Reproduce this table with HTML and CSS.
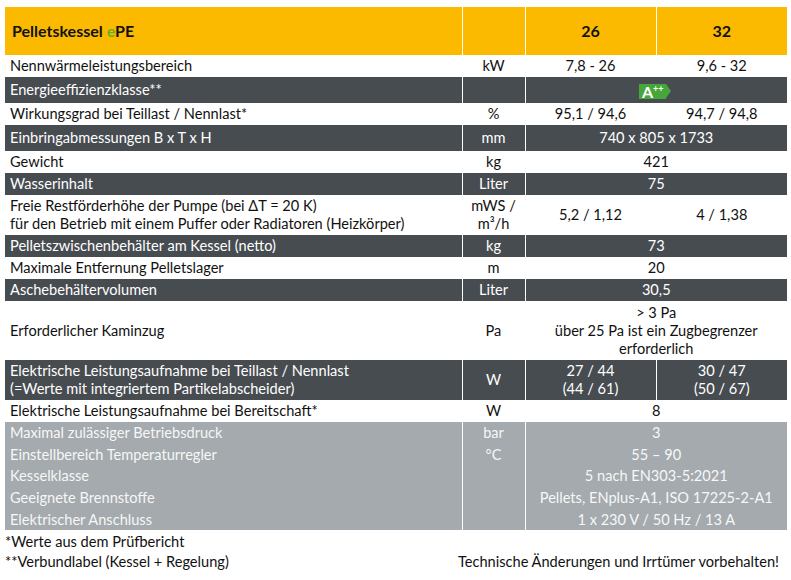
FILE: index.html
```html
<!DOCTYPE html>
<html lang="de">
<head>
<meta charset="utf-8">
<title>Pelletskessel ePE</title>
<link rel="stylesheet" href="styles.css">
</head>
<body>
<table class="spec">
  <colgroup>
    <col class="c-label"><col class="c-unit"><col class="c-val"><col class="c-val">
  </colgroup>
  <thead>
    <tr class="head">
      <th class="label">Pelletskessel <span class="e">e</span>PE</th>
      <th></th>
      <th>26</th>
      <th>32</th>
    </tr>
  </thead>
  <tbody>
    <tr class="w"><td class="label">Nennwärmeleistungsbereich</td><td>kW</td><td>7,8 - 26</td><td>9,6 - 32</td></tr>
    <tr class="d tall"><td class="label">Energieeffizienzklasse**</td><td></td><td colspan="2"><span class="badge">A<sup>++</sup></span></td></tr>
    <tr class="w"><td class="label">Wirkungsgrad bei Teillast / Nennlast*</td><td>%</td><td>95,1 / 94,6</td><td>94,7 / 94,8</td></tr>
    <tr class="d tall"><td class="label">Einbringabmessungen B x T x H</td><td>mm</td><td colspan="2">740 x 805 x 1733</td></tr>
    <tr class="w"><td class="label">Gewicht</td><td>kg</td><td colspan="2">421</td></tr>
    <tr class="d"><td class="label">Wasserinhalt</td><td>Liter</td><td colspan="2">75</td></tr>
    <tr class="w two"><td class="label">Freie Restförderhöhe der Pumpe (bei ΔT = 20 K)<br>für den Betrieb mit einem Puffer oder Radiatoren (Heizkörper)</td><td>mWS /<br>m³/h</td><td>5,2 / 1,12</td><td>4 / 1,38</td></tr>
    <tr class="d"><td class="label">Pelletszwischenbehälter am Kessel (netto)</td><td>kg</td><td colspan="2">73</td></tr>
    <tr class="w"><td class="label">Maximale Entfernung Pelletslager</td><td>m</td><td colspan="2">20</td></tr>
    <tr class="d"><td class="label">Aschebehältervolumen</td><td>Liter</td><td colspan="2">30,5</td></tr>
    <tr class="w three"><td class="label">Erforderlicher Kaminzug</td><td>Pa</td><td colspan="2">&gt; 3 Pa<br>über 25 Pa ist ein Zugbegrenzer<br>erforderlich</td></tr>
    <tr class="d two"><td class="label">Elektrische Leistungsaufnahme bei Teillast / Nennlast<br>(=Werte mit integriertem Partikelabscheider)</td><td>W</td><td>27 / 44<br>(44 / 61)</td><td>30 / 47<br>(50 / 67)</td></tr>
    <tr class="w"><td class="label">Elektrische Leistungsaufnahme bei Bereitschaft*</td><td>W</td><td colspan="2">8</td></tr>
    <tr class="g first"><td class="label">Maximal zulässiger Betriebsdruck</td><td>bar</td><td colspan="2">3</td></tr>
    <tr class="g"><td class="label">Einstellbereich Temperaturregler</td><td>°C</td><td colspan="2">55 – 90</td></tr>
    <tr class="g"><td class="label">Kesselklasse</td><td></td><td colspan="2">5 nach EN303-5:2021</td></tr>
    <tr class="g"><td class="label">Geeignete Brennstoffe</td><td></td><td colspan="2">Pellets, ENplus-A1, ISO 17225-2-A1</td></tr>
    <tr class="g last"><td class="label">Elektrischer Anschluss</td><td></td><td colspan="2">1 x 230 V / 50 Hz / 13 A</td></tr>
  </tbody>
</table>
<div class="foot">
  <div class="notes">
    <div>*Werte aus dem Prüfbericht</div>
    <div>**Verbundlabel (Kessel + Regelung)</div>
  </div>
  <div class="disclaimer">Technische Änderungen und Irrtümer vorbehalten!</div>
</div>
</body>
</html>
```

FILE: styles.css
```css
html, body {
  margin: 0;
  background: #ffffff;
}
body {
  padding: 7px 4px 0 5px;
  font-family: Lato, "Open Sans", sans-serif;
  font-size: 14.6px;
  color: #111111;
}
.spec {
  width: 782px;
  border-collapse: collapse;
  table-layout: fixed;
}
.c-label { width: 457px; }
.c-unit { width: 63px; }
.c-val { width: 131px; }

.spec th, .spec td {
  padding: 0;
  text-align: center;
  vertical-align: middle;
  line-height: 18px;
  border-left: 1px solid #ffffff;
  border-top: 0;
  border-bottom: 0;
}
.spec th.label, .spec td.label {
  text-align: left;
  padding-left: 5px;
  border-left: 0;
}
.head th {
  background: #fbb900;
  height: 48px;
  font-weight: 700;
  font-size: 16px;
  color: #111111;
}
.head th.label { padding-left: 7px; }
.head .e {
  color: #6ab023;
}
.w td { background: #ffffff; height: 22px; border-left-color: transparent; }
.d td { background: #474c51; color: #ffffff; height: 22px; }
.d.tall td { height: 26px; }
.two td { height: 40px; }
.three td { height: 59px; }
.g td {
  background: #a4aaae;
  color: #f6f7f7;
  height: 21.6px;
  line-height: 17px;
}
.badge {
  position: relative;
  display: inline-block;
  background: #45a63a;
  color: #ffffff;
  font-weight: 700;
  font-size: 16px;
  line-height: 15px;
  height: 15px;
  padding: 0 2px 0 3px;
  margin-left: -8px;
  vertical-align: middle;
}
.badge::after {
  content: "";
  position: absolute;
  right: -5px;
  top: 0;
  border-top: 7.5px solid transparent;
  border-bottom: 7.5px solid transparent;
  border-left: 5px solid #45a63a;
}
.badge sup {
  font-size: 9px;
  vertical-align: top;
  line-height: 9px;
}
.foot {
  display: flex;
  justify-content: space-between;
  align-items: flex-end;
  margin-top: 2px;
  padding-right: 8px;
  line-height: 20px;
}
```
